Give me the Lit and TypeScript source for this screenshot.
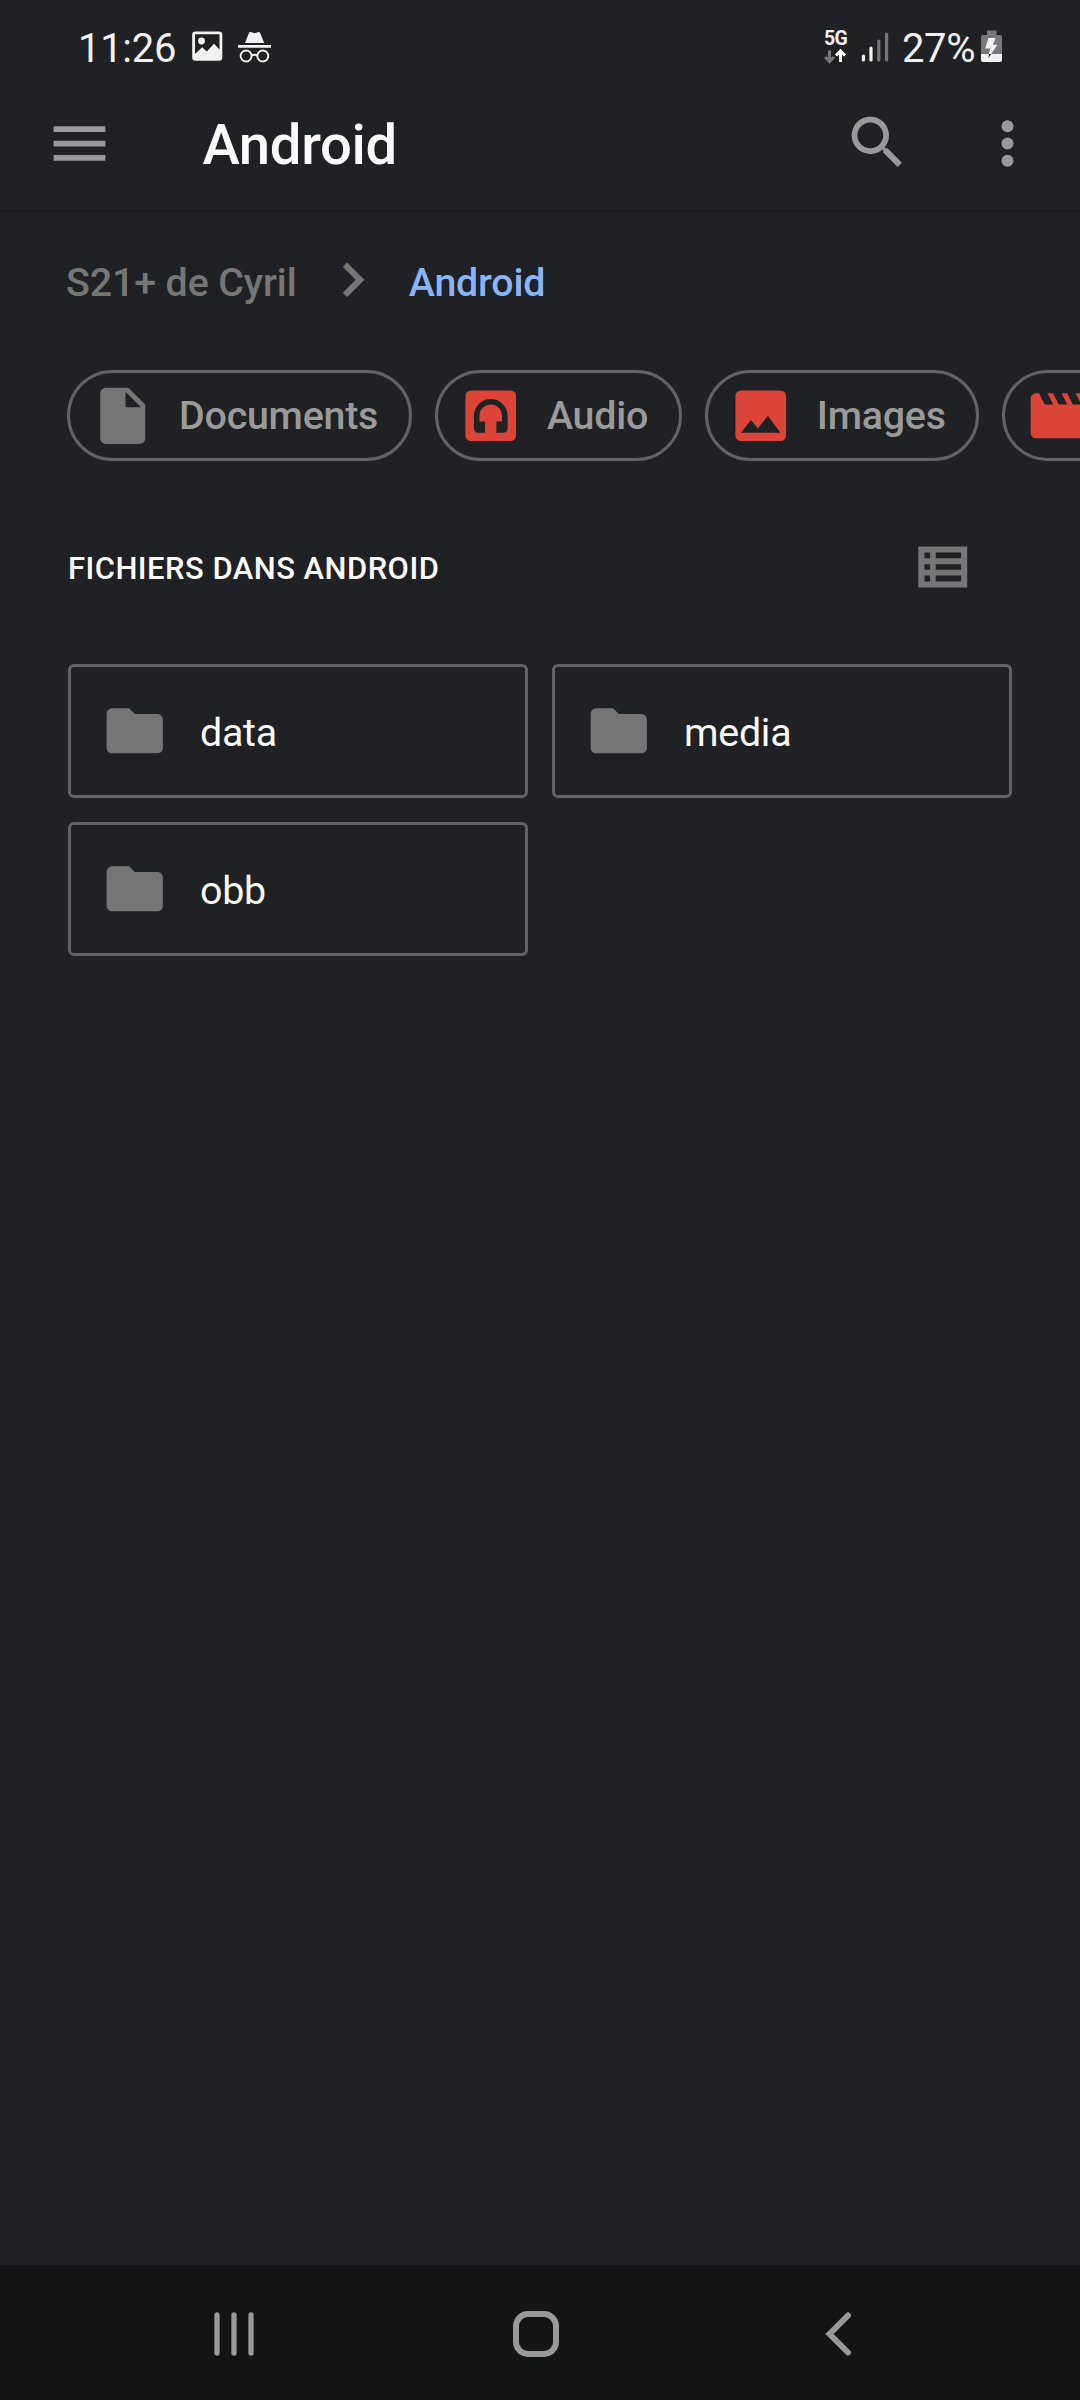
import { LitElement, html, css, svg, nothing } from "lit";
import { customElement, property } from "lit/decorators.js";

const ICONS: Record<string, unknown> = {
  menu: svg`<path d="M3 18h18v-2H3v2zm0-5h18v-2H3v2zm0-7v2h18V6H3z"/>`,
  search: svg`<path d="M15.5 14h-.79l-.28-.27A6.471 6.471 0 0 0 16 9.5 6.5 6.5 0 1 0 9.5 16c1.61 0 3.09-.59 4.23-1.57l.27.28v.79l5 4.99L20.49 19l-4.99-5zm-6 0C7.01 14 5 11.99 5 9.5S7.01 5 9.5 5 14 7.01 14 9.5 11.99 14 9.5 14z"/>`,
  more: svg`<circle cx="12" cy="6" r="2.08"/><circle cx="12" cy="12" r="2.08"/><circle cx="12" cy="18" r="2.08"/>`,
  chevron: svg`<path stroke="currentColor" stroke-width=".3" d="M10 6L8.59 7.41 13.17 12l-4.58 4.59L10 18l6-6z"/>`,
  file: svg`<path d="M6 2c-1.1 0-1.99.9-1.99 2L4 20c0 1.1.89 2 1.99 2H18c1.1 0 2-.9 2-2V8l-6-6H6zm7 7V3.5L18.5 9H13z"/>`,
  audio: svg`<path fill-rule="evenodd" d="M5 3h14a2 2 0 0 1 2 2v14a2 2 0 0 1-2 2H5a2 2 0 0 1-2-2V5a2 2 0 0 1 2-2zM12 6c-3.3 0-6 2.7-6 6v4.5c0 .83.67 1.5 1.5 1.5H10v-4H8v-2c0-2.21 1.79-4 4-4s4 1.79 4 4v2h-2v4h2.500c.83 0 1.5-.67 1.5-1.5V12c0-3.3-2.7-6-6-6z"/>`,
  image: svg`<path fill-rule="evenodd" d="M5 3h14a2 2 0 0 1 2 2v14a2 2 0 0 1-2 2H5a2 2 0 0 1-2-2V5a2 2 0 0 1 2-2zM5 18h14l-4.5-6-3.5 4.51-2.5-3.01z"/>`,
  movie: svg`<path d="M18 4l2 4h-3l-2-4h-2l2 4h-3l-2-4H8l2 4H7L5 4H4c-1.1 0-1.99.9-1.99 2L2 18c0 1.1.9 2 2 2h16c1.1 0 2-.9 2-2V4h-4z"/>`,
  folder: svg`<path d="M10 4H4c-1.1 0-1.99.9-1.99 2L2 18c0 1.1.9 2 2 2h16c1.1 0 2-.9 2-2V8c0-1.1-.9-2-2-2h-8l-2-2z"/>`,
  list: svg`<path fill-rule="evenodd" d="M3.3 4.8h17.400v14.600H3.3zM5.500 6.900v2.100h2V6.900zM9.500 6.900v2.100h9V6.900zM5.500 11.100v2h2v-2zM9.500 11.100v2h9v-2zM5.500 15.100v2.100h2v-2.100zM9.500 15.100v2.100h9v-2.100z"/>`,
};

@customElement("file-icon")
class FileIcon extends LitElement {
  @property() name = "";
  static styles = css`
    :host { display: block; flex: none; width: 67.5px; height: 67.5px; }
    svg { display: block; width: 100%; height: 100%; fill: currentColor; }
  `;
  render() {
    return html`<svg viewBox="0 0 24 24">${ICONS[this.name]}</svg>`;
  }
}

@customElement("status-bar")
class StatusBar extends LitElement {
  static styles = css`
    :host { display: flex; height: 76px; padding: 20px 76px 0 78px; box-sizing: border-box; color: #f1f1f1; }
    .time, .pct { font-size: 40px; line-height: 58px; }
    .time { width: 113px; letter-spacing: -0.3px; }
    .pct { width: 78px; letter-spacing: -0.4px; }
    .space { flex: 1; }
    svg { display: block; flex: none; height: 56px; }
    .net { width: 24px; margin-right: 13px; padding-top: 9px; }
    .gen { font-size: 19.5px; line-height: 20px; font-weight: 700; letter-spacing: -0.6px; }
    .net svg { height: 20px; }
  `;
  render() {
    return html`
      <div class="time">11:26</div>
      <svg width="84" height="56" viewBox="191 20 84 56" fill="#f1f1f1">
        <path fill-rule="evenodd" d="M195.500 31.500h23.500a3.300 3.300 0 0 1 3.300 3.300v22.600a3.300 3.300 0 0 1-3.300 3.300h-23.500a3.300 3.300 0 0 1-3.300-3.300V34.800a3.300 3.300 0 0 1 3.300-3.300zM195 34.300V54l7.200-6.800 4.600 4.300 7.200-7.800 5.500 5.700V34.300z"/>
        <circle cx="201.500" cy="41" r="3.400"/>
        <path d="M245 43l3.700-9.500q.8-2 2.700-1.300l3.200 1 3.200-1q1.900-.7 2.600 1.300l3.800 9.500zM238 45h33v2.800h-33z"/>
        <g fill="none" stroke="#f1f1f1" stroke-width="1.900"><circle cx="246.100" cy="56" r="5.500"/><circle cx="262.800" cy="56" r="5.500"/><path d="M251.400 55.500q3-1.600 6.100 0"/></g>
      </svg>
      <div class="space"></div>
      <div class="net">
        <div class="gen">5G</div>
        <svg width="24" height="20" viewBox="825 49 24 20" fill="none" stroke-width="3">
          <path stroke="#77787a" d="M830.500 50.500v11M826 57l4.500 4.600L835 57"/>
          <path stroke="#fff" d="M841.500 62V51M837 55.500l4.500-4.600 4.500 4.600"/>
        </svg>
      </div>
      <svg width="41" height="56" viewBox="861 20 41 56" stroke-width="3.200" stroke-linecap="round">
        <path stroke="#f1f1f1" d="M863.400 56v4M871 48v12"/>
        <path stroke="#757678" d="M878.800 41v19M886.600 34v26"/>
      </svg>
      <div class="pct">27%</div>
      <svg width="24" height="56" viewBox="980 20 24 56">
        <path fill="#77787a" d="M987 30.500h9.500V35h3.500a2 2 0 0 1 2 2v18h-21V37a2 2 0 0 1 2-2h4z"/>
        <path fill="#f1f1f1" d="M981 54h21v6a2 2 0 0 1-2 2h-17a2 2 0 0 1-2-2z"/>
        <path fill="#f1f1f1" d="M988.500 38h7l-2.500 6.800h4.500L991 54h-2.300l1.700-5.600h-5.200z"/>
        <path fill="#202124" d="M989 54h2.200l-2.700 4z"/>
      </svg>
    `;
  }
}

@customElement("top-bar")
class TopBar extends LitElement {
  static styles = css`
    :host { display: flex; align-items: center; height: 134px; padding: 0 38.5px 0 44.8px; box-sizing: border-box; color: #999; box-shadow: 0 1px 4px rgba(0, 0, 0, 0.4); clip-path: inset(0 0 -8px 0); }
    file-icon { width: 69px; height: 69px; }
    h1 { margin: 4px 0 0 88.6px; flex: 1; color: #fafafa; font-size: 56.25px; font-weight: 500; line-height: 66px; letter-spacing: -0.35px; }
    .search { margin: 0 61px 2px 0; }
  `;
  render() {
    return html`
      <file-icon name="menu"></file-icon>
      <h1>Android</h1>
      <file-icon class="search" name="search"></file-icon>
      <file-icon name="more"></file-icon>
    `;
  }
}

@customElement("filter-chip")
class FilterChip extends LitElement {
  @property() icon = "";
  @property() label = "";
  static styles = css`
    :host { display: flex; flex: none; align-items: center; box-sizing: border-box; height: 91px; padding: 0 30.7px 0 19.4px; gap: 22.2px; border: 3px solid #5f6368; border-radius: 46px; color: #9a9a9a; font-size: 39.375px; font-weight: 500; line-height: 46px; letter-spacing: -0.23px; }
    file-icon { color: #db4437; }
    file-icon[name="file"] { color: #757575; }
  `;
  render() {
    return html`<file-icon name=${this.icon}></file-icon>${this.label ? html`<span>${this.label}</span>` : nothing}`;
  }
}

@customElement("folder-card")
class FolderCard extends LitElement {
  @property() label = "";
  static styles = css`
    :host { display: flex; align-items: center; box-sizing: border-box; height: 134px; padding: 0 30px; gap: 31.5px; border: 3px solid #5f6368; border-radius: 6px; color: #fafafa; font-size: 39.375px; line-height: 46px; letter-spacing: -0.25px; }
    file-icon { color: #757575; }
    span { margin-top: 3px; }
  `;
  render() {
    return html`<file-icon name="folder"></file-icon><span>${this.label}</span>`;
  }
}

@customElement("nav-bar")
class NavBar extends LitElement {
  static styles = css`
    :host { display: flex; height: 135px; padding: 39px 219px 0 204px; box-sizing: border-box; justify-content: space-between; background: #131416; }
    svg { display: block; width: 60px; height: 60px; fill: none; stroke: #99999b; }
    .home { margin-left: 7px; }
  `;
  render() {
    return html`
      <svg viewBox="204 2304 60 60" stroke-width="5.300" stroke-linecap="round"><path d="M217 2315v38M234 2315v38M251 2315v38"/></svg>
      <svg class="home" viewBox="506 2304 60 60" stroke-width="6"><rect x="516" y="2314" width="40" height="40" rx="12"/></svg>
      <svg viewBox="801 2304 60 60" stroke-width="6" stroke-linecap="round"><path d="M848 2315.500L829.500 2334 848 2352.500"/></svg>
    `;
  }
}

@customElement("app-root")
class AppRoot extends LitElement {
  static styles = css`
    :host { display: flex; flex-direction: column; width: 1080px; height: 2400px; overflow: hidden; background: #202124; font-family: Roboto, "Liberation Sans", sans-serif; }
    main { flex: 1; display: flex; flex-direction: column; }
    .crumbs { display: flex; align-items: center; height: 68px; margin-top: 38px; padding-left: 66px; color: #757776; font-size: 39.375px; font-weight: 500; line-height: 46px; letter-spacing: -0.12px; }
    .crumbs span { padding-top: 1px; }
    .crumbs file-icon { margin: -4px 22px 0 22.7px; }
    .crumbs .current { color: #8ab4f8; letter-spacing: -0.2px; }
    .chips { display: flex; gap: 23px; margin-top: 54px; padding-left: 67px; overflow: hidden; }
    .section { display: flex; align-items: center; justify-content: space-between; height: 68px; margin-top: 72px; padding: 0 104px 0 68px; color: #757776; }
    h2 { margin: 3px 0 0; color: #fafafa; font-size: 30.94px; font-weight: 500; line-height: 36px; letter-spacing: 0.48px; }
    .grid { display: grid; grid-template-columns: 460px 460px; gap: 24px; margin-top: 63px; padding-left: 68px; }
  `;
  private filters = [["file", "Documents"], ["audio", "Audio"], ["image", "Images"], ["movie", ""]];
  private folders = ["data", "media", "obb"];
  render() {
    return html`
      <status-bar></status-bar>
      <top-bar></top-bar>
      <main>
        <nav class="crumbs">
          <span>S21+ de Cyril</span>
          <file-icon name="chevron"></file-icon>
          <span class="current">Android</span>
        </nav>
        <div class="chips">
          ${this.filters.map(([icon, label]) => html`<filter-chip icon=${icon} label=${label}></filter-chip>`)}
        </div>
        <div class="section">
          <h2>FICHIERS DANS ANDROID</h2>
          <file-icon name="list"></file-icon>
        </div>
        <div class="grid">
          ${this.folders.map((name) => html`<folder-card label=${name}></folder-card>`)}
        </div>
      </main>
      <nav-bar></nav-bar>
    `;
  }
}
